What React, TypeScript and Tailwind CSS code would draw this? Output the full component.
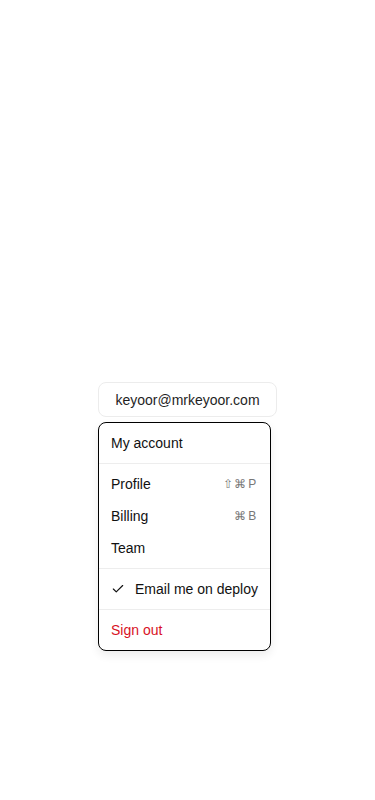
import { Check } from "lucide-react";

function Item({
  label,
  shortcut,
  className
}: {
  label: string;
  shortcut?: string;
  className?: string;
}) {
  return (
    <div className={`flex h-8 items-center justify-between px-3 text-sm ${className ?? "text-[#111]"}`}>
      <span>{label}</span>
      {shortcut ? <span className="text-xs tracking-[0.15em] text-[#777]">{shortcut}</span> : null}
    </div>
  );
}

export default function App() {
  return (
    <div className="flex min-h-[800px] flex-col items-start bg-white pl-[98px] pt-[382px] font-['Liberation_Sans',Arial,sans-serif]">
      <div className="flex w-[179px] flex-col">
        <button className="h-[35px] w-full rounded-lg border border-[#ececec] bg-white text-sm text-[#1f1f1f]">
          keyoor@mrkeyoor.com
        </button>
        <div className="mt-[5px] w-[173px] rounded-lg border border-black bg-white shadow-[0_4px_10px_rgba(0,0,0,0.08)]">
          <div className="py-1">
            <Item label="My account" />
          </div>
          <div className="h-px bg-[#ededed]" />
          <div className="py-1">
            <Item label="Profile" shortcut="⇧⌘P" />
            <Item label="Billing" shortcut="⌘B" />
            <Item label="Team" />
          </div>
          <div className="h-px bg-[#ededed]" />
          <div className="py-1">
            <div className="flex h-8 items-center gap-2.5 whitespace-nowrap px-3 text-sm text-[#111]">
              <Check className="h-3.5 w-3.5 shrink-0" strokeWidth={2} />
              <span>Email me on deploy</span>
            </div>
          </div>
          <div className="h-px bg-[#ededed]" />
          <div className="py-1">
            <Item label="Sign out" className="text-[#d8121f]" />
          </div>
        </div>
      </div>
    </div>
  );
}
